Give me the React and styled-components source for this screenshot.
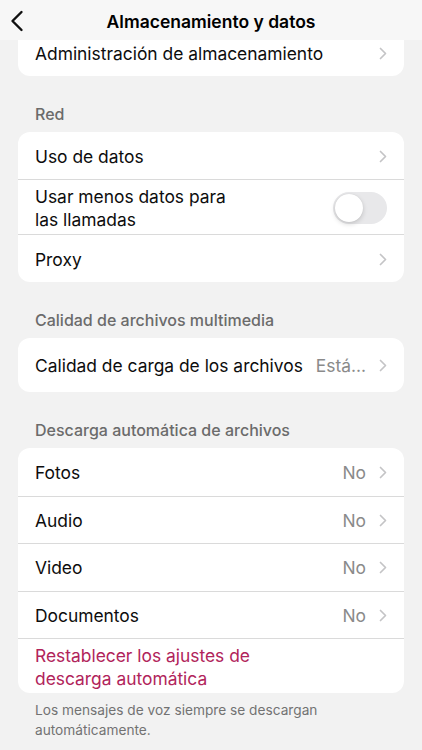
import React, { useState } from 'react';
import styled, { createGlobalStyle } from 'styled-components';

const GlobalStyle = createGlobalStyle`
  html, body {
    margin: 0;
    padding: 0;
    background: #f2f2f2;
  }
  body {
    font-family: Inter, "Noto Sans", "Liberation Sans", sans-serif;
    -webkit-font-smoothing: antialiased;
  }
`;

const Screen = styled.div`
  position: relative;
  width: 422px;
  height: 750px;
  overflow: hidden;
  background: #f2f2f2;
`;

const Header = styled.div`
  position: absolute;
  top: 0;
  left: 0;
  right: 0;
  height: 40px;
  background: rgba(247, 247, 247, 0.97);
  display: flex;
  align-items: center;
  justify-content: center;
  z-index: 2;
`;

const BackButton = styled.div`
  position: absolute;
  left: 8px;
  top: 9px;
  width: 18px;
  height: 24px;
  display: flex;
  align-items: center;
  justify-content: center;
`;

const Title = styled.div`
  font-size: 17.5px;
  font-weight: 600;
  color: #000;
  padding-top: 2px;
`;

const Content = styled.div`
  padding: 29px 18px 0;
  display: flex;
  flex-direction: column;
`;

const SectionTitle = styled.div`
  font-size: 16px;
  font-weight: 500;
  color: #6b6b6b;
  padding: 29px 17px 8px;
  line-height: 19px;
`;

const Card = styled.div`
  background: #fff;
  border-radius: 12px;
  overflow: hidden;
`;

const Row = styled.div`
  display: flex;
  align-items: center;
  min-height: ${(p) => p.height || 47}px;
  padding-left: 17px;
  padding-top: 1px;
  position: relative;
  box-sizing: border-box;

  & + & {
    border-top: 1px solid #dadada;
  }
`;

const Label = styled.div`
  flex: 1;
  font-size: 17.4px;
  line-height: 23px;
  color: ${(p) => (p.danger ? '#b1245b' : '#0d0d0d')};
  padding-right: 10px;
`;

const Value = styled.div`
  font-size: 17.4px;
  color: #8a8a8a;
  margin-right: 12px;
`;

const ChevronBox = styled.div`
  width: 10px;
  margin-right: 16px;
  display: flex;
  align-items: center;
  justify-content: center;
`;

const Toggle = styled.div`
  width: 54px;
  height: 32px;
  border-radius: 16px;
  background: #e8e8ea;
  margin-right: 17px;
  position: relative;
  flex-shrink: 0;
`;

const Knob = styled.div`
  position: absolute;
  top: 2px;
  left: ${(p) => (p.on ? '24px' : '2px')};
  width: 28px;
  height: 28px;
  border-radius: 50%;
  background: #fff;
  box-shadow: 0 2px 5px rgba(0, 0, 0, 0.16), 0 0 1px rgba(0, 0, 0, 0.1);
`;

const Footer = styled.div`
  font-size: 13.7px;
  line-height: 20px;
  color: #727272;
  padding: 7px 17px 0;
`;

const Chevron = () => (
  <ChevronBox>
    <svg width="8" height="13" viewBox="0 0 8 13">
      <path d="M1.5 1.5 L6.5 6.5 L1.5 11.5" fill="none" stroke="#c4c4c6" strokeWidth="1.7" strokeLinecap="round" strokeLinejoin="round" />
    </svg>
  </ChevronBox>
);

const App = () => {
  const [lessData, setLessData] = useState(false);

  return (
    <>
      <GlobalStyle />
      <Screen>
        <Header>
          <BackButton>
            <svg width="14" height="22" viewBox="0 0 14 22">
              <path d="M11.5 2 L2.5 11 L11.5 20" fill="none" stroke="#111" strokeWidth="2.4" strokeLinecap="round" strokeLinejoin="round" />
            </svg>
          </BackButton>
          <Title>Almacenamiento y datos</Title>
        </Header>
        <Content>
          <Card>
            <Row>
              <Label>Administración de almacenamiento</Label>
              <Chevron />
            </Row>
          </Card>

          <SectionTitle>Red</SectionTitle>
          <Card>
            <Row>
              <Label>Uso de datos</Label>
              <Chevron />
            </Row>
            <Row height={55} onClick={() => setLessData(!lessData)}>
              <Label>
                Usar menos datos para
                <br />
                las llamadas
              </Label>
              <Toggle>
                <Knob on={lessData ? 1 : 0} />
              </Toggle>
            </Row>
            <Row height={48}>
              <Label>Proxy</Label>
              <Chevron />
            </Row>
          </Card>

          <SectionTitle>Calidad de archivos multimedia</SectionTitle>
          <Card>
            <Row height={54}>
              <Label>Calidad de carga de los archivos</Label>
              <Value>Está...</Value>
              <Chevron />
            </Row>
          </Card>

          <SectionTitle>Descarga automática de archivos</SectionTitle>
          <Card>
            {['Fotos', 'Audio', 'Video', 'Documentos'].map((item) => (
              <Row key={item} height={47.5}>
                <Label>{item}</Label>
                <Value>No</Value>
                <Chevron />
              </Row>
            ))}
            <Row height={55}>
              <Label danger>
                Restablecer los ajustes de
                <br />
                descarga automática
              </Label>
            </Row>
          </Card>
          <Footer>
            Los mensajes de voz siempre se descargan
            <br />
            automáticamente.
          </Footer>
        </Content>
      </Screen>
    </>
  );
};

export default App;
